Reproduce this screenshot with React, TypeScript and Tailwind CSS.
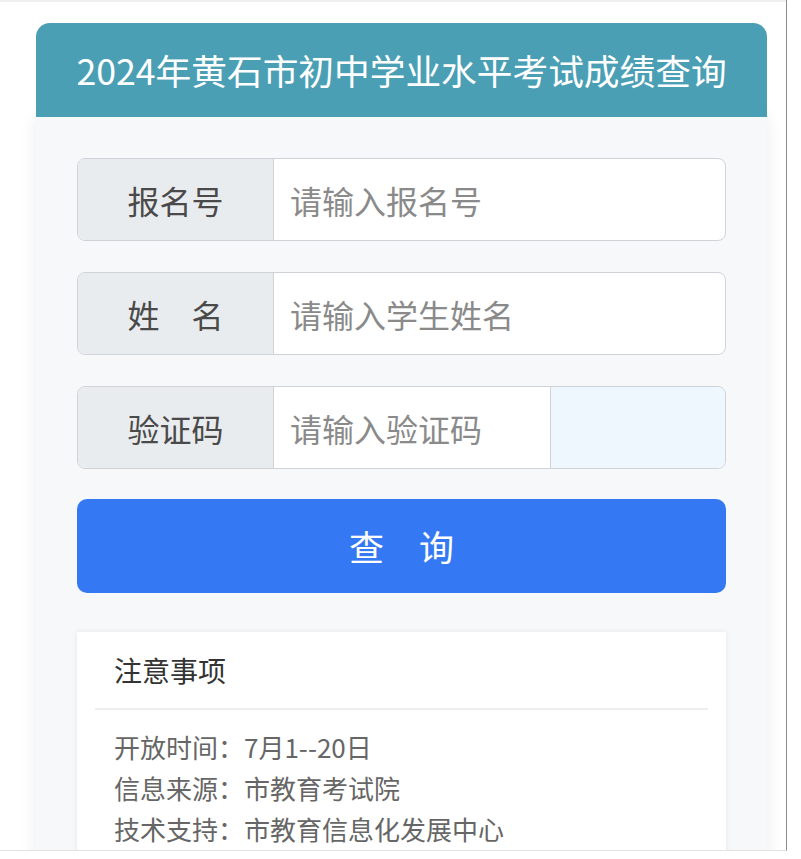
import React from 'react';

const rows = [
  { label: '报名号', placeholder: '请输入报名号' },
  { label: '姓　名', placeholder: '请输入学生姓名' },
];

function FieldRow({ label, placeholder, captcha }: { label: string; placeholder: string; captcha?: boolean }) {
  return (
    <div className="flex h-[83px] rounded-[8px] border border-[#cfd3d8] overflow-hidden bg-white">
      <div className="w-[196px] shrink-0 flex items-center justify-center bg-[#e9ecef] border-r border-[#cfd3d8] text-[32px] text-[#4a4a4a]">
        {label}
      </div>
      <div className="flex-1 flex items-center pl-[16px] text-[32px] text-[#8a8a8a]">{placeholder}</div>
      {captcha && <div className="w-[175px] shrink-0 bg-[#eef6fe] border-l border-[#cfd3d8]" />}
    </div>
  );
}

export default function App() {
  return (
    <div className="w-[801px] h-[859px] bg-white overflow-hidden font-['Noto_Sans_CJK_SC','Noto_Sans',sans-serif]">
      <div className="w-[787px] h-[851px] border-r border-b border-r-[#8c8c8c] border-b-[#e2e2e2] overflow-hidden">
        <div className="h-[2px] bg-[#eef0f2]" />
        <div className="pt-[21px] pl-[36px]">
          <div className="w-[731px]">
            <div className="relative z-10 h-[94px] rounded-t-[14px] bg-[#4b9fb5] flex items-center justify-center text-white text-[35.7px] leading-none pb-[1px]">
              2024年黄石市初中学业水平考试成绩查询
            </div>
            <div className="bg-[#f7f8fa] shadow-[0_0_16px_rgba(0,0,0,0.08)] px-[41px] pt-[41px] pb-[40px]">
              <div className="flex flex-col gap-[31px]">
                {rows.map((r) => (
                  <FieldRow key={r.label} label={r.label} placeholder={r.placeholder} />
                ))}
                <FieldRow label="验证码" placeholder="请输入验证码" captcha />
              </div>
              <button className="mt-[30px] w-full h-[94px] rounded-[10px] bg-[#3479f3] text-white text-[35px] flex items-center justify-center">
                查　询
              </button>
              <div className="mt-[39px] bg-white shadow-[0_0_6px_rgba(0,0,0,0.08)] px-[18px] pb-[30px]">
                <div className="h-[76px] flex items-center pl-[19px] text-[28px] text-[#333]">注意事项</div>
                <div className="h-[2px] bg-[#eeeeee]" />
                <div className="pt-[16px] pl-[19px] text-[26px] leading-[41px] text-[#666]">
                  <div>开放时间：7月1--20日</div>
                  <div>信息来源：市教育考试院</div>
                  <div>技术支持：市教育信息化发展中心</div>
                </div>
              </div>
            </div>
          </div>
        </div>
      </div>
    </div>
  );
}
